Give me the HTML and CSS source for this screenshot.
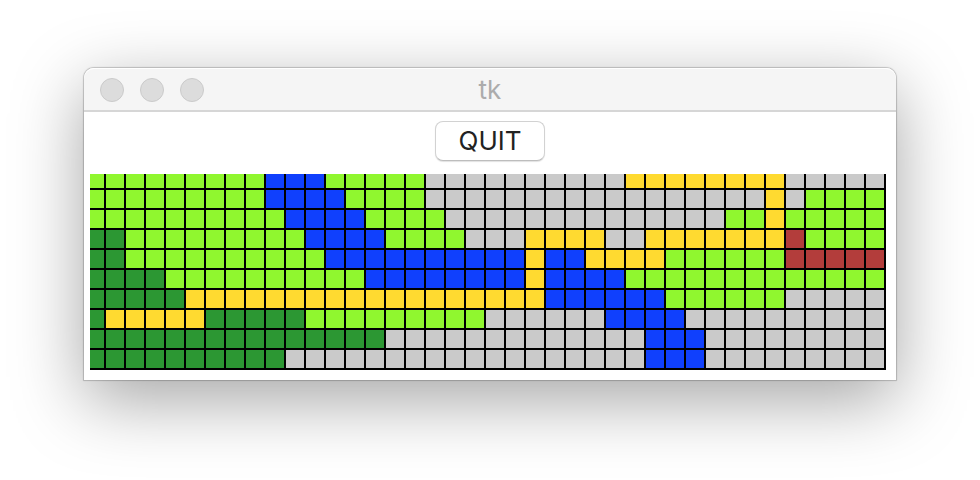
FILE: index.html
```html
<!DOCTYPE html>
<html lang="en">
<head>
<meta charset="utf-8">
<title>tk</title>
<link rel="stylesheet" href="styles.css">
</head>
<body>
<main class="window">
  <header class="titlebar">
    <div class="controls">
      <button class="control" type="button" aria-label="Close"></button>
      <button class="control" type="button" aria-label="Minimize"></button>
      <button class="control" type="button" aria-label="Zoom"></button>
    </div>
    <h1 class="title">tk</h1>
  </header>
  <div class="content">
    <button class="quit" type="button">QUIT</button>
    <!-- 40 x 10 tiles of 20 units; each tile ends in a 2-unit grid line -->
    <svg class="map" viewBox="4 4 796 196" role="img" aria-label="Terrain map">
      <defs>
        <pattern id="grid" width="20" height="20" patternUnits="userSpaceOnUse">
          <path d="M18 0h2v20h-20v-2h18z"/>
        </pattern>
      </defs>
      <rect class="plain" width="800" height="200"/>
      <g transform="scale(20)" shape-rendering="crispEdges">
        <path class="grass" d="M0 0h9v2h-9zM12 0h5v1h-5zM13 1h4v1h-4zM36 1h4v1h-4zM0 2h10v1h-10zM14 2h4v1h-4zM32 2h2v1h-2zM35 2h5v1h-5zM2 3h9v1h-9zM15 3h4v1h-4zM36 3h4v1h-4zM2 4h10v1h-10zM29 4h6v1h-6zM4 5h10v1h-10zM27 5h13v1h-13zM29 6h6v1h-6zM11 7h9v1h-9z"/>
        <path class="forest" d="M0 3h2v2h-2zM0 5h4v1h-4zM0 6h5v1h-5zM0 7h1v1h-1zM6 7h5v1h-5zM0 8h15v1h-15zM0 9h10v1h-10z"/>
        <path class="water" d="M9 0h3v1h-3zM9 1h4v1h-4zM10 2h4v1h-4zM11 3h4v1h-4zM12 4h10v1h-10zM23 4h2v1h-2zM14 5h8v1h-8zM23 5h4v1h-4zM23 6h6v1h-6zM26 7h4v1h-4zM28 8h3v2h-3z"/>
        <path class="road" d="M27 0h8v1h-8zM34 1h1v2h-1zM22 3h4v1h-4zM28 3h7v1h-7zM22 4h1v2h-1zM25 4h4v1h-4zM5 6h18v1h-18zM1 7h5v1h-5z"/>
        <path class="wall" d="M35 3h1v1h-1zM35 4h5v1h-5z"/>
      </g>
      <rect width="800" height="200" fill="url(#grid)"/>
    </svg>
  </div>
</main>
</body>
</html>
```
FILE: styles.css
```css
* {
  box-sizing: border-box;
}

body {
  min-height: 100vh;
  margin: 0;
  padding: 68px 84px;
  background: #fff;
  font-family: Inter, "Liberation Sans", sans-serif;
}

.window {
  background: #fff;
  border-radius: 10px 10px 0 0;
  box-shadow:
    0 0 1px 1px rgba(0, 0, 0, 0.2),
    0 20px 70px rgba(0, 0, 0, 0.36);
}

.titlebar {
  display: grid;
  grid-template-columns: 1fr auto 1fr;
  align-items: center;
  height: 44px;
  padding: 2px 16px 0;
  border-bottom: 2px solid #d6d6d6;
  border-radius: 10px 10px 0 0;
  background: #f5f5f5;
  box-shadow: inset 0 1px #fff;
}

.controls {
  display: flex;
  gap: 16px;
}

.control {
  width: 24px;
  height: 24px;
  padding: 0;
  border: 1px solid #cbcbcb;
  border-radius: 50%;
  background: #dcdcdc;
}

.title {
  margin: 0;
  color: #acacac;
  font-size: 26px;
  font-weight: 400;
  line-height: 32px;
}

.content {
  display: flex;
  flex-direction: column;
  align-items: center;
  gap: 13px;
  padding: 9px 0 10px;
}

.quit {
  min-width: 110px;
  height: 40px;
  padding: 0 22px;
  border: 1px solid #d2d2d2;
  border-bottom-color: #bdbdbd;
  border-radius: 8px;
  background: #fff;
  box-shadow: 0 1px 1px rgba(0, 0, 0, 0.12);
  color: #222;
  font-family: inherit;
  font-size: 26px;
  line-height: 32px;
}

.map {
  display: block;
  align-self: stretch;
  margin: 0 10px 0 6px;
}

.plain {
  fill: #cacaca;
}

.grass {
  fill: #90f72f;
}

.forest {
  fill: #2c9733;
}

.water {
  fill: #1040fd;
}

.road {
  fill: #ffda30;
}

.wall {
  fill: #b33d3b;
}
```
